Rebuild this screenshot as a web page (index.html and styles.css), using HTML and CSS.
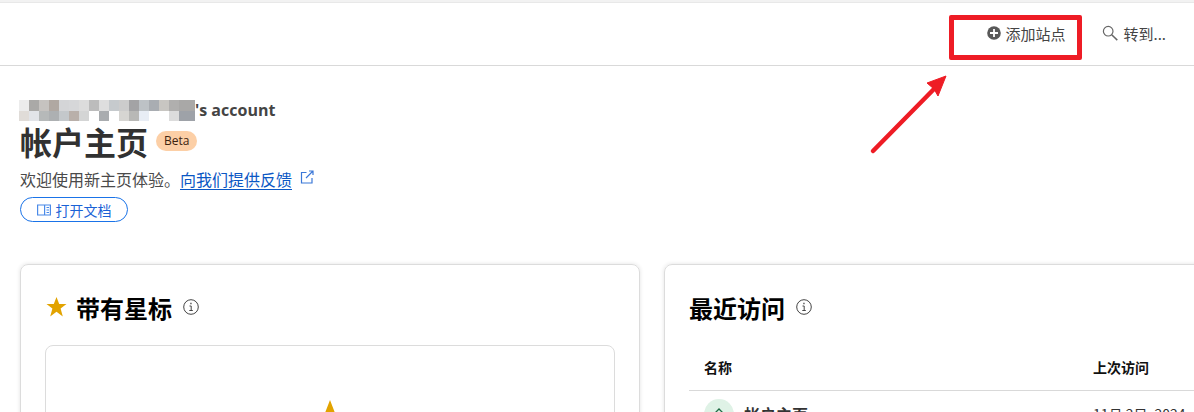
FILE: index.html
```html
<!DOCTYPE html>
<html lang="zh-CN">
<head>
    <meta charset="UTF-8">
    <title>帐户主页</title>
    <link rel="stylesheet" href="styles.css">
</head>
<body>
    <div class="top-strip"></div>
    <header class="topbar">
        <a class="top-link add-site">
            <svg width="14" height="14" viewBox="0 0 14 14"><circle cx="7" cy="7" r="6.800" fill="#595959"/><path d="M7 3v8M3 7h8" stroke="#fff" stroke-width="1.800"/></svg>
            添加站点
        </a>
        <a class="top-link go-to">
            <svg width="16" height="16" viewBox="0 0 16 16" fill="none" stroke="#666" stroke-width="1.200"><circle cx="6.200" cy="6.200" r="4.800"/><path d="M9.700 9.700l5.600 5.400" stroke-width="1.500"/></svg>
            转到...
        </a>
    </header>

    <main class="page">
        <div class="account-name"><span class="blur-name"></span>'s account</div>
        <div class="title-row">
            <h1>帐户主页</h1>
            <span class="beta">Beta</span>
        </div>
        <p class="welcome">欢迎使用新主页体验。<a class="feedback">向我们提供反馈</a>
            <svg class="ext-icon" width="14" height="14" viewBox="0 0 14 14" fill="none" stroke="#3b78d8" stroke-width="1.200"><path d="M6.500 2.500H1.500v10.500h10.500V8"/><path d="M6 8l7-7M9 1h4v4"/></svg>
        </p>
        <a class="docs-btn">
            <svg width="14" height="12" viewBox="0 0 14 12" fill="none" stroke="#4a8ae8" stroke-width="1.200"><path d="M.6 1h12.800v10H.6zM7.600 1v10M9.500 3.500h2.500M9.500 6h2.500M9.500 8.500h2.500"/></svg>
            打开文档
        </a>

        <div class="cards">
            <section class="card">
                <div class="card-head">
                    <svg class="star" width="21" height="20" viewBox="0 0 21 20"><path d="M10.500 0l2.700 7h7.300l-5.900 4.500 2.200 7.900-6.300-4.700-6.300 4.700 2.200-7.900L.5 7h7.300z" fill="#e2a300"/></svg>
                    <h2>带有星标</h2>
                    <svg class="info" width="16" height="16" viewBox="0 0 16 16" fill="none" stroke="#444"><circle cx="8" cy="8" r="7.300"/><path d="M6.500 7h1.700v4.500M6.300 11.500h3.500"/><path d="M7.300 4.500h1.300" stroke-width="1.500"/></svg>
                </div>
                <div class="starred-box">
                    <svg class="big-star" width="120" height="114" viewBox="0 0 21 20"><path d="M10.500 0l2.700 7h7.300l-5.900 4.500 2.200 7.900-6.300-4.700-6.300 4.700 2.200-7.900L.5 7h7.300z" fill="#e2a300"/></svg>
                </div>
            </section>

            <section class="card">
                <div class="card-head">
                    <h2>最近访问</h2>
                    <svg class="info" width="16" height="16" viewBox="0 0 16 16" fill="none" stroke="#444"><circle cx="8" cy="8" r="7.300"/><path d="M6.500 7h1.700v4.500M6.300 11.500h3.500"/><path d="M7.300 4.500h1.300" stroke-width="1.500"/></svg>
                </div>
                <div class="table-head">
                    <span>名称</span>
                    <span>上次访问</span>
                </div>
                <div class="table-row">
                    <span class="row-name">
                        <span class="home-badge">
                            <svg width="20" height="14" viewBox="0 0 20 14" fill="none" stroke="#1f6b45" stroke-width="1.300"><path d="M2 10l8-8 8 8M5 8v6M15 8v6"/></svg>
                        </span>
                        帐户主页
                    </span>
                    <span>11月 2日, 2024</span>
                </div>
            </section>
        </div>
    </main>

    <!-- annotation on top of the screenshot -->
    <div class="mark-box"></div>
    <svg class="mark-arrow" width="90" height="90" viewBox="0 0 90 90"><path d="M5 83L66 21" stroke="#ee1c25" stroke-width="4.500" stroke-linecap="round"/><path d="M78 8L70 28 66 21 59 15z" fill="#ee1c25" stroke="#ee1c25" stroke-linejoin="round"/></svg>
</body>
</html>
```
FILE: styles.css
```css
* {
    box-sizing: border-box;
}
html, body {
    height: 412px;
    overflow: hidden;
}
body {
    margin: 0;
    background: #fff;
    color: #333;
    font-family: "Noto Sans CJK SC", "Open Sans", sans-serif;
}
.top-strip {
    height: 3px;
    background: #f2f2f2;
    border-bottom: 1px solid #e8e8e8;
}
.topbar {
    height: 63px;
    display: flex;
    justify-content: flex-end;
    align-items: center;
    gap: 37px;
    padding: 0 28px 2px 0;
    border-bottom: 1px solid #d9d9d9;
}
.top-link {
    display: flex;
    align-items: center;
    gap: 5px;
    font-size: 15px;
    color: #444;
}
.add-site {
    gap: 4px;
}
.page {
    padding: 33px 0 0 20px;
}
.account-name {
    display: flex;
    align-items: center;
    height: 22px;
    font-family: "Open Sans", sans-serif;
    font-size: 16px;
    font-weight: 700;
    color: #444;
}
/* pixelated account name */
.blur-name {
    width: 176px;
    height: 21px;
    margin-left: -1px;
    background:
        linear-gradient(90deg, #ececec 10px, #aaa9a7 10px 20px, #c6c3c0 20px 30px, #b0a8a2 30px 40px, #d4d5d7 40px 50px, #d6d7d9 50px 60px, #dcdcdc 60px 70px, #bcbcbc 70px 80px, #dedede 80px 90px, #c6cacd 90px 100px, #ccc 100px 110px, #a3a3a5 110px 120px, #bdc2c6 120px 130px, #a9adb2 130px 140px, #c8c6c2 140px 150px, #b0afae 150px 160px, #a9a8a7 160px 176px) top / 100% 11px no-repeat,
        linear-gradient(90deg, #e0dcd8 10px, #e2e4e8 10px 20px, #b6b9b9 20px 30px, #adb0b2 30px 40px, #c4c8cb 40px 50px, #b9b0aa 50px 60px, #d4d5d5 60px 70px, #fff 70px 80px, #a9acaf 80px 90px, #fff 90px 100px, #d6d5d2 100px 110px, #b8b8b6 110px 120px, #e8edf5 120px 130px, #fff 130px 150px, #dcdcdc 150px 160px, #9ea2a8 160px 176px) bottom / 100% 10px no-repeat;
}
.title-row {
    display: flex;
    align-items: center;
    gap: 8px;
    height: 40px;
}
h1 {
    margin: 0;
    font-size: 32px;
    line-height: 40px;
    font-weight: 700;
    color: #313131;
}
.beta {
    padding: 0 8px;
    height: 20px;
    line-height: 20px;
    border-radius: 10px;
    background: #fccfa6;
    font-family: "Open Sans", sans-serif;
    font-size: 12px;
    color: #3d2410;
}
.welcome {
    margin: 6px 0 0;
    height: 24px;
    display: flex;
    align-items: center;
    font-size: 16px;
    line-height: 24px;
    color: #4a4a4a;
}
.feedback {
    color: #0b57c4;
    border-bottom: 1px solid #0b57c4;
    line-height: 20px;
}
.ext-icon {
    margin: -4px 0 0 8px;
}
.docs-btn {
    display: flex;
    align-items: center;
    justify-content: center;
    gap: 5px;
    width: 108px;
    height: 25px;
    margin-top: 6px;
    border: 1px solid #1a73e8;
    border-radius: 13px;
    font-size: 14px;
    color: #1a62d6;
}
.cards {
    display: grid;
    grid-template-columns: 620px 620px;
    gap: 24px;
    margin-top: 42px;
}
.card {
    height: 300px;
    padding: 24px;
    border: 1px solid #dcdcdc;
    border-radius: 8px;
    box-shadow: 0 0 4px rgba(0, 0, 0, 0.12);
}
.card-head {
    display: flex;
    align-items: center;
    gap: 9px;
    height: 36px;
}
.star {
    margin-left: 1px;
}
h2 {
    margin: 0;
    font-size: 24px;
    font-weight: 700;
    color: #000;
}
.info {
    margin: -1px 0 0 2px;
}
.starred-box {
    height: 200px;
    margin-top: 20px;
    padding-top: 54px;
    display: flex;
    justify-content: center;
    border: 1px solid #dcdcdc;
    border-radius: 8px;
}
.table-head {
    display: flex;
    justify-content: space-between;
    margin-top: 18px;
    height: 48px;
    padding: 0 0 0 15px;
    align-items: center;
    font-size: 14px;
    font-weight: 700;
    color: #111;
    border-bottom: 1px solid #d9d9d9;
}
.table-head span:last-child,
.table-row > span:last-child {
    width: 166px;
}
.table-row {
    display: flex;
    justify-content: space-between;
    padding: 8px 0 0 15px;
    font-size: 16px;
    color: #333;
}
.table-row > span:last-child {
    font-size: 14px;
    line-height: 30px;
}
.row-name {
    display: flex;
    align-items: center;
    gap: 10px;
    font-weight: 700;
}
.home-badge {
    width: 30px;
    height: 30px;
    display: flex;
    align-items: center;
    justify-content: center;
    border-radius: 50%;
    background: #dff2e6;
}
/* red annotation drawn over the page */
.mark-box {
    position: absolute;
    left: 949px;
    top: 15px;
    width: 133px;
    height: 45px;
    border: 5px solid #ee1c25;
    border-radius: 2px;
}
.mark-arrow {
    position: absolute;
    left: 868px;
    top: 68px;
}
```
